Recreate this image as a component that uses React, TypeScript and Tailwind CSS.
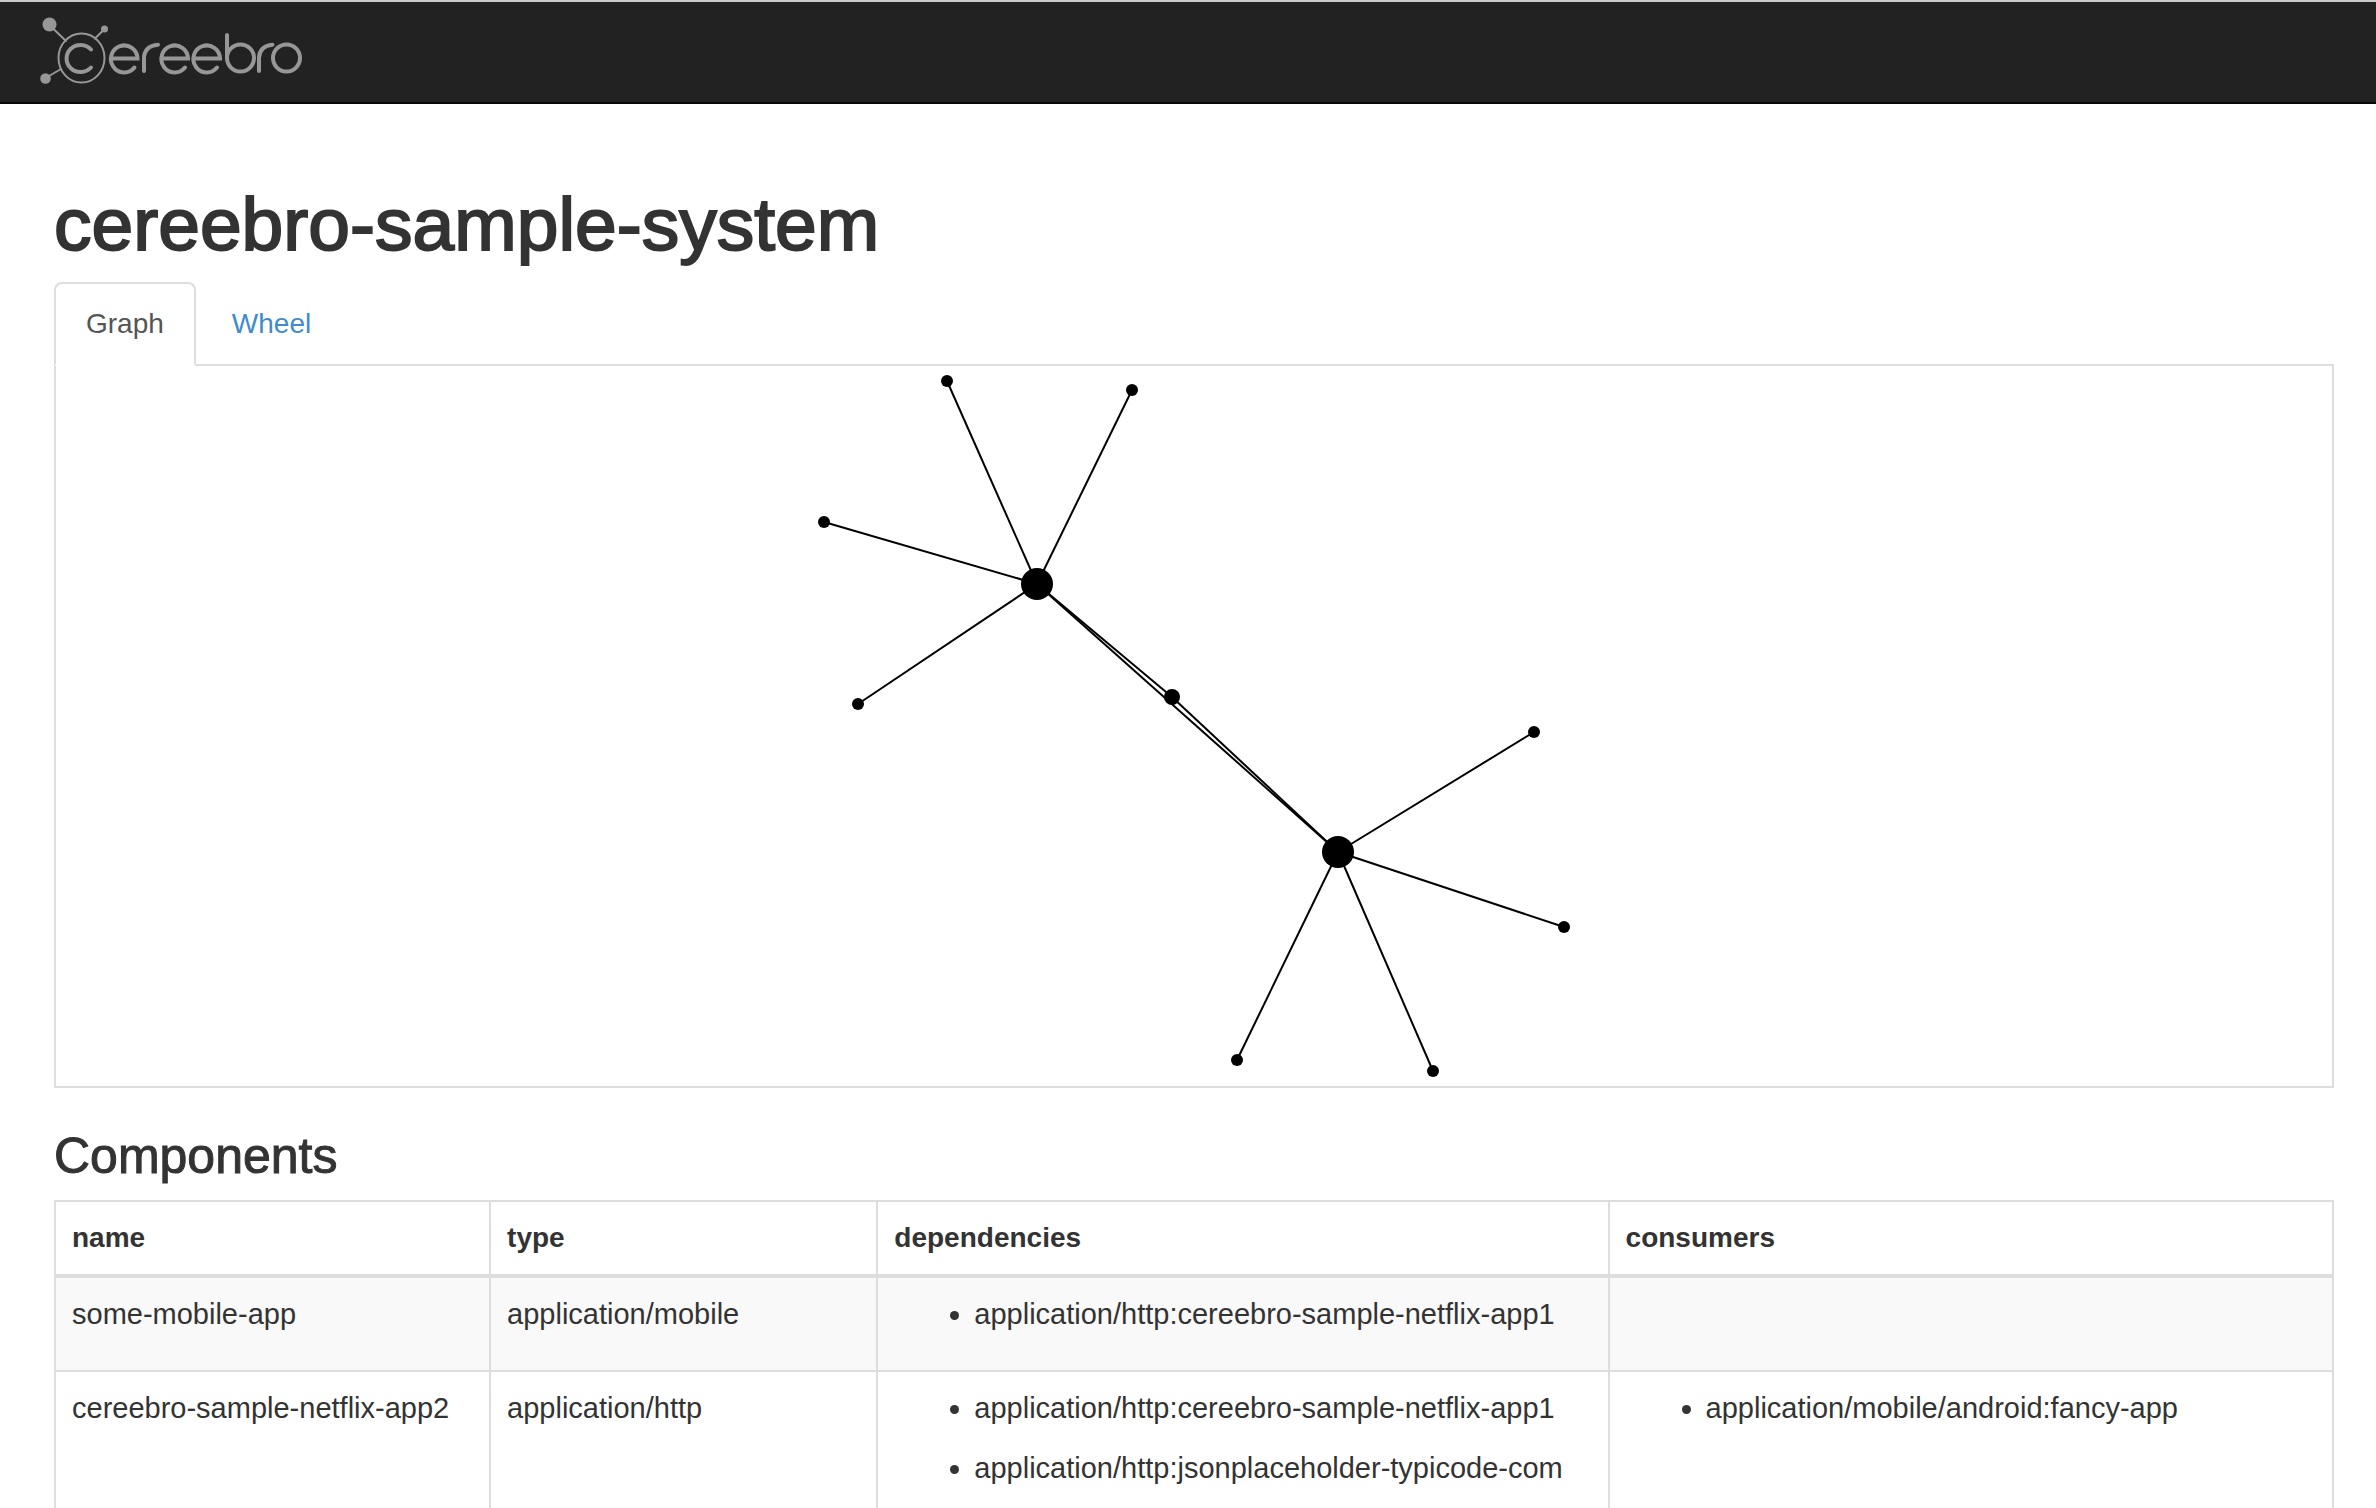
import { useState } from "react";

type Node = { x: number; y: number; r: number };

const nodes: Node[] = [
  { x: 981, y: 218, r: 16 },
  { x: 1282, y: 486, r: 16 },
  { x: 1116, y: 331, r: 8 },
  { x: 891, y: 15, r: 6 },
  { x: 1076, y: 24, r: 6 },
  { x: 768, y: 156, r: 6 },
  { x: 802, y: 338, r: 6 },
  { x: 1478, y: 366, r: 6 },
  { x: 1508, y: 561, r: 6 },
  { x: 1181, y: 694, r: 6 },
  { x: 1377, y: 705, r: 6 },
];

const links: [number, number][] = [
  [0, 1],
  [0, 2],
  [2, 1],
  [0, 3],
  [0, 4],
  [0, 5],
  [0, 6],
  [1, 7],
  [1, 8],
  [1, 9],
  [1, 10],
];

const components = [
  {
    name: "some-mobile-app",
    type: "application/mobile",
    dependencies: ["application/http:cereebro-sample-netflix-app1"],
    consumers: [],
  },
  {
    name: "cereebro-sample-netflix-app2",
    type: "application/http",
    dependencies: [
      "application/http:cereebro-sample-netflix-app1",
      "application/http:jsonplaceholder-typicode-com",
    ],
    consumers: ["application/mobile/android:fancy-app"],
  },
];

function Logo() {
  return (
    <svg
      viewBox="38 14 268 72"
      className="h-[72px] w-[268px]"
      fill="none"
      stroke="#979797"
      strokeWidth="4"
      strokeLinecap="round"
      role="img"
      aria-label="cereebro"
    >
      <g fill="#979797" stroke="none">
        <circle cx="49.5" cy="24.5" r="7" />
        <circle cx="104.5" cy="29" r="3.5" />
        <circle cx="45.5" cy="78.5" r="5.3" />
      </g>
      <ellipse cx="81.5" cy="58" rx="23" ry="24.5" strokeWidth="2" />
      <path d="M53 28.500 66 41M102 31.500 95 38.500M49 76 61 69" strokeWidth="2" />
      <path d="M91 49.500A14 13.500 0 1 0 91 67.500" />
      <path d="M111.500 58.500H137.500A13.300 13.500 0 1 0 134.500 67.500" />
      <path d="M144 71V58Q144.500 46 158 44.800" />
      <path d="M162 58.500H188A13.300 13.500 0 1 0 185 67.500" />
      <path d="M194 58.500H220A13.300 13.500 0 1 0 217 67.500" />
      <path d="M227 35V58" />
      <circle cx="240.500" cy="58" r="13.500" />
      <path d="M259 71V58Q259.500 46 272.500 44.800" />
      <circle cx="286.500" cy="58" r="13.500" />
    </svg>
  );
}

function Graph() {
  return (
    <svg viewBox="0 0 2276 720" className="block h-[720px] w-full" role="img" aria-label="Component graph">
      <g stroke="#000" strokeWidth="2">
        {links.map(([a, b]) => (
          <line key={`${a}-${b}`} x1={nodes[a].x} y1={nodes[a].y} x2={nodes[b].x} y2={nodes[b].y} />
        ))}
      </g>
      {nodes.map((n) => (
        <circle key={`${n.x}-${n.y}`} cx={n.x} cy={n.y} r={n.r} />
      ))}
    </svg>
  );
}

function RefList({ items }: { items: string[] }) {
  return (
    <ul className="list-disc pl-20">
      {items.map((item) => (
        <li key={item} className="mb-5">
          {item}
        </li>
      ))}
    </ul>
  );
}

const tabBase = "rounded-t-lg border-2 px-[30px] py-5";
const cell = "border-2 border-[#ddd] p-4 text-left align-top text-[29px] leading-10";

export default function App() {
  const [tab, setTab] = useState("Graph");
  return (
    <div className="h-screen overflow-hidden bg-white font-['Liberation_Sans',Arial,sans-serif] text-[28px] leading-10 text-[#333]">
      <header className="border-t-2 border-b-2 border-t-[#c8cacb] border-b-[#080808] bg-[#222]">
        <a href="#" className="block w-fit pt-3 pb-4 pl-[38px]">
          <Logo />
        </a>
      </header>
      <main className="pt-[82px] pr-[42px] pl-[54px]">
        <h1 className="mb-5 text-[75px] leading-[76px] font-normal [-webkit-text-stroke:2px_#333]">cereebro-sample-system</h1>
        <div role="tablist" className="flex gap-1 border-b-2 border-[#ddd]">
          {["Graph", "Wheel"].map((name) => (
            <button
              key={name}
              role="tab"
              aria-selected={tab === name}
              onClick={() => setTab(name)}
              className={
                tab === name
                  ? `${tabBase} -mb-0.5 border-[#ddd] border-b-white bg-white text-[#555]`
                  : `${tabBase} -mb-0.5 border-transparent text-[#428bca]`
              }
            >
              {name}
            </button>
          ))}
        </div>
        <div role="tabpanel" className="border-2 border-t-0 border-[#ddd]">
          <Graph />
        </div>
        <h3 className="mt-[42px] mb-[18px] text-[50px] leading-[52px] font-normal [-webkit-text-stroke:1px_#333]">Components</h3>
        <table className="w-full table-fixed border-collapse">
          <colgroup>
            <col className="w-[19.1%]" />
            <col className="w-[17%]" />
            <col className="w-[32.1%]" />
            <col />
          </colgroup>
          <thead>
            <tr>
              {["name", "type", "dependencies", "consumers"].map((h) => (
                <th key={h} scope="col" className="border-2 border-b-4 border-[#ddd] p-4 text-left font-bold">
                  {h}
                </th>
              ))}
            </tr>
          </thead>
          <tbody>
            {components.map((c) => (
              <tr key={c.name} className="odd:bg-[#f9f9f9]">
                <td className={cell}>{c.name}</td>
                <td className={cell}>{c.type}</td>
                <td className={cell}>
                  <RefList items={c.dependencies} />
                </td>
                <td className={cell}>
                  <RefList items={c.consumers} />
                </td>
              </tr>
            ))}
          </tbody>
        </table>
      </main>
    </div>
  );
}
